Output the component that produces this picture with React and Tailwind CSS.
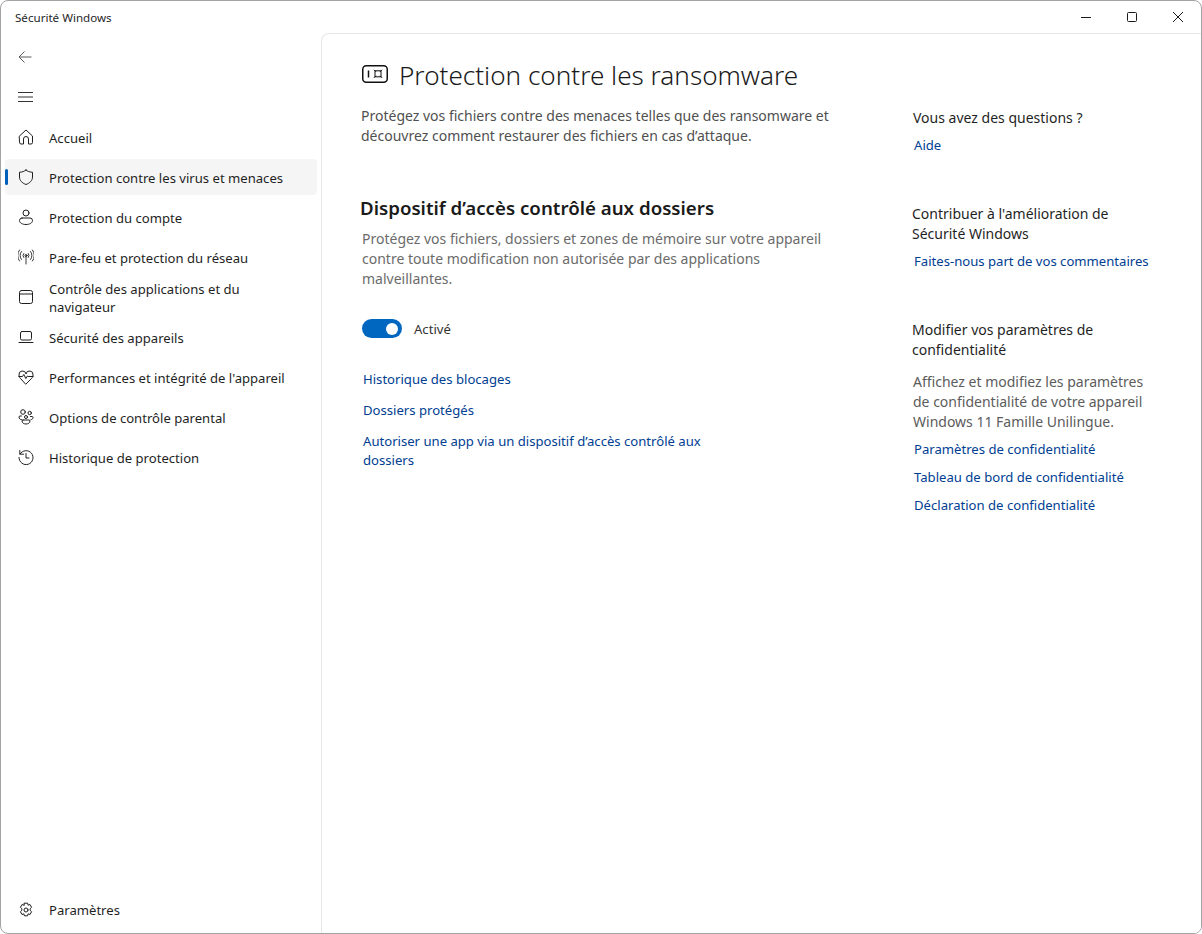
const Icon = ({ children, size = 16, box = 16 }) => (
  <svg width={size} height={size} viewBox={`0 0 ${box} ${box}`} fill="none" stroke="#1f1f1f" strokeWidth="1" strokeLinecap="round" strokeLinejoin="round">
    {children}
  </svg>
);

const HomeIcon = () => (
  <Icon>
    <path d="M1.500 7 8 1l6.500 6v6.500a1.500 1.500 0 0 1-1.500 1.500h-2.500V10a2.500 2.500 0 0 0-5 0v5H3a1.500 1.500 0 0 1-1.500-1.500z" />
  </Icon>
);
const ShieldIcon = () => (
  <Icon>
    <path d="M8 1c1.600 1.400 3.800 2.200 6.500 2.200V8c0 3.600-2.600 6-6.500 7.500C4.100 14 1.500 11.600 1.500 8V3.200C4.200 3.200 6.400 2.400 8 1z" />
  </Icon>
);
const AccountIcon = () => (
  <Icon>
    <circle cx="8" cy="4" r="3" />
    <path d="M4 9h8a2.500 2.500 0 0 1 2.500 2.500c0 2.500-3 4-6.500 4s-6.500-1.500-6.500-4A2.500 2.500 0 0 1 4 9z" />
  </Icon>
);
const WifiIcon = () => (
  <Icon>
    <circle cx="8" cy="6.500" r="1" />
    <path d="M8 7.500V15M5.700 4.500a3.200 3.200 0 0 0 0 4M10.300 4.500a3.200 3.200 0 0 1 0 4M3.500 2.500a6 6 0 0 0 0 8M12.500 2.500a6 6 0 0 1 0 8M1.500 1a9 9 0 0 0 0 11M14.500 1a9 9 0 0 1 0 11" strokeWidth="0.9" />
  </Icon>
);
const BrowserIcon = () => (
  <Icon>
    <rect x="1.500" y="1.500" width="13" height="13" rx="2" />
    <path d="M1.500 5h13" />
  </Icon>
);
const LaptopIcon = () => (
  <Icon>
    <rect x="2.500" y="2.500" width="11" height="8.500" rx="1.500" />
    <path d="M1 13.500h14" />
  </Icon>
);
const HeartIcon = () => (
  <Icon>
    <path d="M2.500 9.500C1.500 8.500 1 7.300 1 6a3.500 3.500 0 0 1 7-1 3.500 3.500 0 0 1 7 1c0 1.300-.5 2.500-1.500 3.500L8 15z" />
    <path d="M.8 7.500h3.700l1.300-2 2 4 1.500-2.500.8.5h5" fill="#fff" />
  </Icon>
);
const FamilyIcon = () => (
  <Icon>
    <circle cx="5" cy="3" r="2.300" />
    <circle cx="11.700" cy="4" r="1.700" />
    <circle cx="8" cy="8" r="1.500" />
    <path d="M3.500 7H2a1 1 0 0 0-1 1c0 1.500 1 2.500 2.500 2.700M12.500 7.500H14a1 1 0 0 1 1 1c0 1.200-.8 2-2 2.200M5 11h6a1 1 0 0 1 1 1c0 2-2 3-4 3s-4-1-4-3a1 1 0 0 1 1-1z" />
  </Icon>
);
const HistoryIcon = () => (
  <Icon>
    <path d="M1.800 1.500v3.700h3.700M2 5a7 7 0 1 1-1 3.500" />
    <path d="M8 4.500V9h3" />
  </Icon>
);
const GearIcon = () => (
  <Icon>
    <circle cx="8" cy="8" r="2" />
    <path d="M6.400 1.200h3.200l.5 2 1.900-.7 1.600 2.800-1.500 1.400v1.600l1.500 1.400-1.600 2.800-1.900-.7-.5 2H6.400l-.5-2-1.900.7-1.600-2.800 1.500-1.400V6.700L2.400 5.300 4 2.500l1.900.7z" />
  </Icon>
);

const navItems = [
  { label: 'Accueil', icon: <HomeIcon /> },
  { label: 'Protection contre les virus et menaces', icon: <ShieldIcon />, active: true },
  { label: 'Protection du compte', icon: <AccountIcon /> },
  { label: 'Pare-feu et protection du réseau', icon: <WifiIcon /> },
  { label: 'Contrôle des applications et du navigateur', icon: <BrowserIcon /> },
  { label: 'Sécurité des appareils', icon: <LaptopIcon /> },
  { label: "Performances et intégrité de l'appareil", icon: <HeartIcon /> },
  { label: 'Options de contrôle parental', icon: <FamilyIcon /> },
  { label: 'Historique de protection', icon: <HistoryIcon /> },
];

const NavItem = ({ label, icon, active, labelClass = 'mt-[2px]' }) => (
  <div className="h-10 flex items-center pl-[4px] pr-1">
    <div className={`relative w-full flex items-center pl-[13px] ${active ? 'h-9 bg-[#f5f5f5] rounded-[4px]' : ''}`}>
      {active && <div className="absolute left-0 top-[10px] w-[3px] h-4 rounded-full bg-[#005fb8]" />}
      <div className="w-4 h-4 mr-[15px] shrink-0 flex">{icon}</div>
      <span className={`${labelClass} text-[13.100px] leading-[18px] text-[#1f1f1f] w-[240px]`}>{label}</span>
    </div>
  </div>
);

const Link = ({ children, className = '' }) => (
  <div className={`text-[13.120px] leading-[19px] text-[#003e92] ${className}`}>{children}</div>
);

export default function App() {
  return (
    <div className="w-[1202px] h-[934px] bg-white border border-[#a3a3a3] rounded-[8px] overflow-hidden flex flex-col font-['Noto_Sans','Open_Sans',sans-serif]">
      {/* title bar */}
      <div className="h-[32px] shrink-0 flex items-center justify-between">
        <span className="ml-[14px] mt-[2px] text-[11.600px] text-[#1f1f1f]">Sécurité Windows</span>
        <div className="flex items-center">
          <div className="w-[46px] flex justify-center">
            <svg width="10" height="10" viewBox="0 0 10 10" stroke="#1a1a1a"><path d="M0 5.500h10" /></svg>
          </div>
          <div className="w-[46px] flex justify-center">
            <svg width="10" height="10" viewBox="0 0 10 10" fill="none" stroke="#1a1a1a"><rect x=".5" y=".5" width="9" height="9" rx="1" /></svg>
          </div>
          <div className="w-[46px] flex justify-center">
            <svg width="10" height="10" viewBox="0 0 10 10" stroke="#1a1a1a"><path d="M0 0l10 10M10 0 0 10" /></svg>
          </div>
        </div>
      </div>

      <div className="flex-1 flex min-h-0">
        {/* left nav */}
        <nav className="w-[320px] shrink-0 flex flex-col pt-[4px] pb-[3px]">
          <div className="h-10 flex items-center pl-[17px]">
            <svg width="14" height="14" viewBox="0 0 14 14" fill="none" stroke="#5c5c5c"><path d="M13.500 7H1M6.500 1.500 1 7l5.500 5.500" /></svg>
          </div>
          <div className="h-10 flex items-center pl-[17px]">
            <svg width="15" height="12" viewBox="0 0 15 12" stroke="#333"><path d="M0 1.500h15M0 6h15M0 10.500h15" /></svg>
          </div>
          {navItems.map((item) => (
            <NavItem key={item.label} {...item} />
          ))}
          <div className="mt-auto">
            <NavItem label="Paramètres" icon={<GearIcon />} labelClass="mt-0" />
          </div>
        </nav>

        {/* content */}
        <main className="flex-1 flex bg-white border-l border-t border-[#e8e8e8] rounded-tl-[8px]">
          <section className="w-[590px] shrink-0 pl-[39px] pt-[23px]">
            <div className="flex items-center h-[36px]">
              <svg width="26" height="18" viewBox="0 0 26 18" fill="none" stroke="#111" className="ml-[1px] mr-[11px] -mt-[3px]">
                <rect x=".75" y=".75" width="24.500" height="16.500" rx="3.500" strokeWidth="1.500" />
                <path d="M6.500 5.500v7" strokeWidth="1.500" />
                <rect x="13" y="5.800" width="6" height="6" strokeWidth="1" />
                <path d="M12 4.800l2 2M20 4.800l-2 2M12 12.800l2-2M20 12.800l-2-2" strokeWidth="1" />
              </svg>
              <h1 className="text-[26.100px] leading-[36px] font-light text-[#1a1a1a] whitespace-nowrap">Protection contre les ransomware</h1>
            </div>
            <p className="mt-[13px] text-[14px] leading-[20px] text-[#4f4f4f] w-[490px]">
              Protégez vos fichiers contre des menaces telles que des ransomware et découvrez comment restaurer des fichiers en cas d’attaque.
            </p>
            <h2 className="mt-[49px] -ml-[1px] text-[18.700px] leading-[26px] font-semibold text-[#1a1a1a]">Dispositif d’accès contrôlé aux dossiers</h2>
            <p className="mt-[8px] ml-[1px] text-[14px] leading-[20px] text-[#6b6b6b] w-[480px]">
              Protégez vos fichiers, dossiers et zones de mémoire sur votre appareil contre toute modification non autorisée par des applications malveillantes.
            </p>
            <div className="mt-[30px] ml-[1px] flex items-start h-5">
              <div className="w-10 h-[19px] rounded-full bg-[#0067c0] flex items-center justify-end pr-[4px]">
                <div className="w-3 h-3 rounded-full bg-white" />
              </div>
              <span className="ml-3 text-[13.100px] leading-[20px] text-[#333]">Activé</span>
            </div>
            <div className="ml-[2px] mt-[31px]">
              <Link>Historique des blocages</Link>
              <Link className="mt-[12px]">Dossiers protégés</Link>
              <Link className="mt-[12px] w-[360px]">Autoriser une app via un dispositif d’accès contrôlé aux dossiers</Link>
            </div>
          </section>

          <aside className="flex-1 pt-[74px] text-[14px] leading-[20px] text-[#1f1f1f]">
            <p className="ml-[1px]">Vous avez des questions ?</p>
            <Link className="ml-[2px] mt-[8px]">Aide</Link>

            <p className="mt-[49px] w-[240px]">Contribuer à l'amélioration de Sécurité Windows</p>
            <Link className="ml-[2px] mt-[8px]">Faites-nous part de vos commentaires</Link>

            <p className="mt-[49px] w-[240px]">Modifier vos paramètres de confidentialité</p>
            <p className="mt-[12px] ml-[1px] text-[#5c5c5c] w-[240px]">Affichez et modifiez les paramètres de confidentialité de votre appareil Windows 11 Famille Unilingue.</p>
            <Link className="ml-[2px] mt-[8px]">Paramètres de confidentialité</Link>
            <Link className="ml-[2px] mt-[9px]">Tableau de bord de confidentialité</Link>
            <Link className="ml-[2px] mt-[9px]">Déclaration de confidentialité</Link>
          </aside>
        </main>
      </div>
    </div>
  );
}
